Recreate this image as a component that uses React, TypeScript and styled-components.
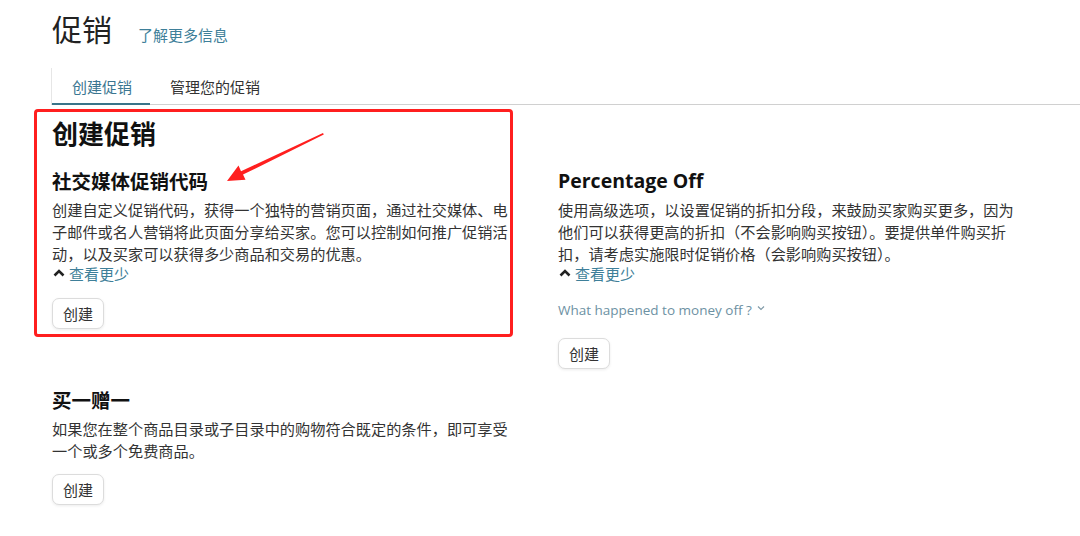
import styled, { createGlobalStyle } from "styled-components";

const GlobalStyle = createGlobalStyle`
  html, body {
    margin: 0;
    padding: 0;
    background: #fff;
  }
  body {
    font-family: "Noto Sans CJK SC", "Open Sans", sans-serif;
    color: #333;
  }
`;

const promos = [
  {
    title: "社交媒体促销代码",
    text: "创建自定义促销代码，获得一个独特的营销页面，通过社交媒体、电子邮件或名人营销将此页面分享给买家。您可以控制如何推广促销活动，以及买家可以获得多少商品和交易的优惠。",
    more: true,
    gap: 15,
  },
  {
    title: "Percentage Off",
    text: "使用高级选项，以设置促销的折扣分段，来鼓励买家购买更多，因为他们可以获得更高的折扣（不会影响购买按钮）。要提供单件购买折扣，请考虑实施限时促销价格（会影响购买按钮）。",
    more: true,
    note: "What happened to money off ?",
    gap: 18,
  },
  {
    title: "买一赠一",
    text: "如果您在整个商品目录或子目录中的购物符合既定的条件，即可享受一个或多个免费商品。",
    gap: 13,
  },
];

export default function App() {
  return (
    <Page>
      <GlobalStyle />
      <Header>
        <Title>促销</Title>
        <HeadLink>了解更多信息</HeadLink>
      </Header>
      <Tabs>
        <Tab $active>创建促销</Tab>
        <Tab>管理您的促销</Tab>
      </Tabs>
      <Content>
        <Heading>创建促销</Heading>
        <Grid>
          {promos.map((p, i) => (
            <Card key={`promo-${i}`}>
              <CardTitle $latin={i === 1}>{p.title}</CardTitle>
              <CardText>{p.text}</CardText>
              {p.more ? (
                <Toggle>
                  <svg width="12" height="8" viewBox="0 0 12 8">
                    <polyline
                      points="1.5,6.5 6,2 10.5,6.5"
                      fill="none"
                      stroke="#222"
                      strokeWidth="2.6"
                    />
                  </svg>
                  <span>查看更少</span>
                </Toggle>
              ) : (
                <></>
              )}
              {p.note ? (
                <Note>
                  {p.note}
                  <svg width="8" height="6" viewBox="0 0 8 6">
                    <polyline
                      points="1,1.5 4,4.5 7,1.5"
                      fill="none"
                      stroke="#7d98a6"
                      strokeWidth="1.1"
                    />
                  </svg>
                </Note>
              ) : (
                <></>
              )}
              <CreateButton $gap={p.gap}>创建</CreateButton>
            </Card>
          ))}
        </Grid>
      </Content>

      {/* annotation layer */}
      <Highlight />
      <Arrow viewBox="0 0 1080 536">
        <polygon
          points="323,133 241,171.2 238.5,165.5 227,181 245.5,179.8 243,174.6 323.8,134.6"
          fill="#ff1f1f"
        />
      </Arrow>
    </Page>
  );
}

const Page = styled.div`
  position: relative;
  width: 1080px;
  height: 536px;
  overflow: hidden;
  padding: 8px 0 0 52px;
  box-sizing: border-box;
`;

const Header = styled.div`
  display: flex;
  align-items: baseline;
  gap: 26px;
  height: 40px;
`;

const Title = styled.h1`
  margin: 0;
  font-size: 30px;
  line-height: 40px;
  font-weight: 400;
  color: #222;
`;

const HeadLink = styled.a`
  font-size: 15px;
  color: #3e7f99;
  cursor: pointer;
`;

const Tabs = styled.div`
  display: flex;
  margin-top: 20px;
  border-left: 1px solid #e6e6e6;
  border-bottom: 1px solid #d0d0d0;
  margin-left: -1px;
`;

const Tab = styled.div<{ $active?: boolean }>`
  padding: 8px 18px 5px 20px;
  font-size: 15px;
  line-height: 22px;
  color: ${(p) => (p.$active ? "#3b7691" : "#333")};
  border-bottom: 2px solid ${(p) => (p.$active ? "#3a7489" : "transparent")};
  margin-bottom: -1px;
`;

const Content = styled.div`
  padding-top: 12px;
`;

const Heading = styled.h2`
  margin: 0 0 20px;
  font-size: 26px;
  line-height: 32px;
  font-weight: 700;
  color: #111;
`;

const Grid = styled.div`
  display: grid;
  grid-template-columns: 462px 462px;
  column-gap: 44px;
  row-gap: 19px;
  align-items: start;
`;

const Card = styled.div`
  display: flex;
  flex-direction: column;
  align-items: flex-start;
`;

const CardTitle = styled.h3<{ $latin?: boolean }>`
  margin: 0 0 5px;
  font-family: ${(p) =>
    p.$latin ? '"Open Sans", "Noto Sans CJK SC", sans-serif' : '"Noto Sans CJK SC", sans-serif'};
  font-size: 19.5px;
  line-height: 24px;
  font-weight: 700;
  color: #111;
`;

const CardText = styled.p`
  margin: 0;
  font-size: 15.2px;
  line-height: 22px;
  color: #333;
`;

const Toggle = styled.a`
  display: flex;
  align-items: center;
  gap: 4px;
  margin-top: 0;
  padding-left: 1px;
  font-size: 15px;
  line-height: 19px;
  color: #3e7f99;
  cursor: pointer;
  svg {
    margin-top: -1px;
  }
`;

const Note = styled.a`
  display: flex;
  align-items: center;
  gap: 5px;
  margin-top: 17px;
  font-family: "Open Sans", sans-serif;
  font-size: 13.5px;
  line-height: 20px;
  color: #6d91a3;
  svg {
    margin-top: -4px;
  }
`;

const CreateButton = styled.button<{ $gap: number }>`
  margin-top: ${(p) => p.$gap}px;
  height: 31px;
  padding: 0 10px;
  font-family: "Noto Sans CJK SC", sans-serif;
  font-size: 15px;
  color: #333;
  background: #fff;
  border: 1px solid #dcdcdc;
  border-radius: 7px;
  box-shadow: 0 1px 3px rgba(0, 0, 0, 0.08);
  cursor: pointer;
`;

const Highlight = styled.div`
  position: absolute;
  left: 34px;
  top: 109px;
  width: 479px;
  height: 228px;
  box-sizing: border-box;
  border: 3px solid #ff1f1f;
  border-radius: 4px;
  pointer-events: none;
`;

const Arrow = styled.svg`
  position: absolute;
  left: 0;
  top: 0;
  width: 1080px;
  height: 536px;
  pointer-events: none;
`;
